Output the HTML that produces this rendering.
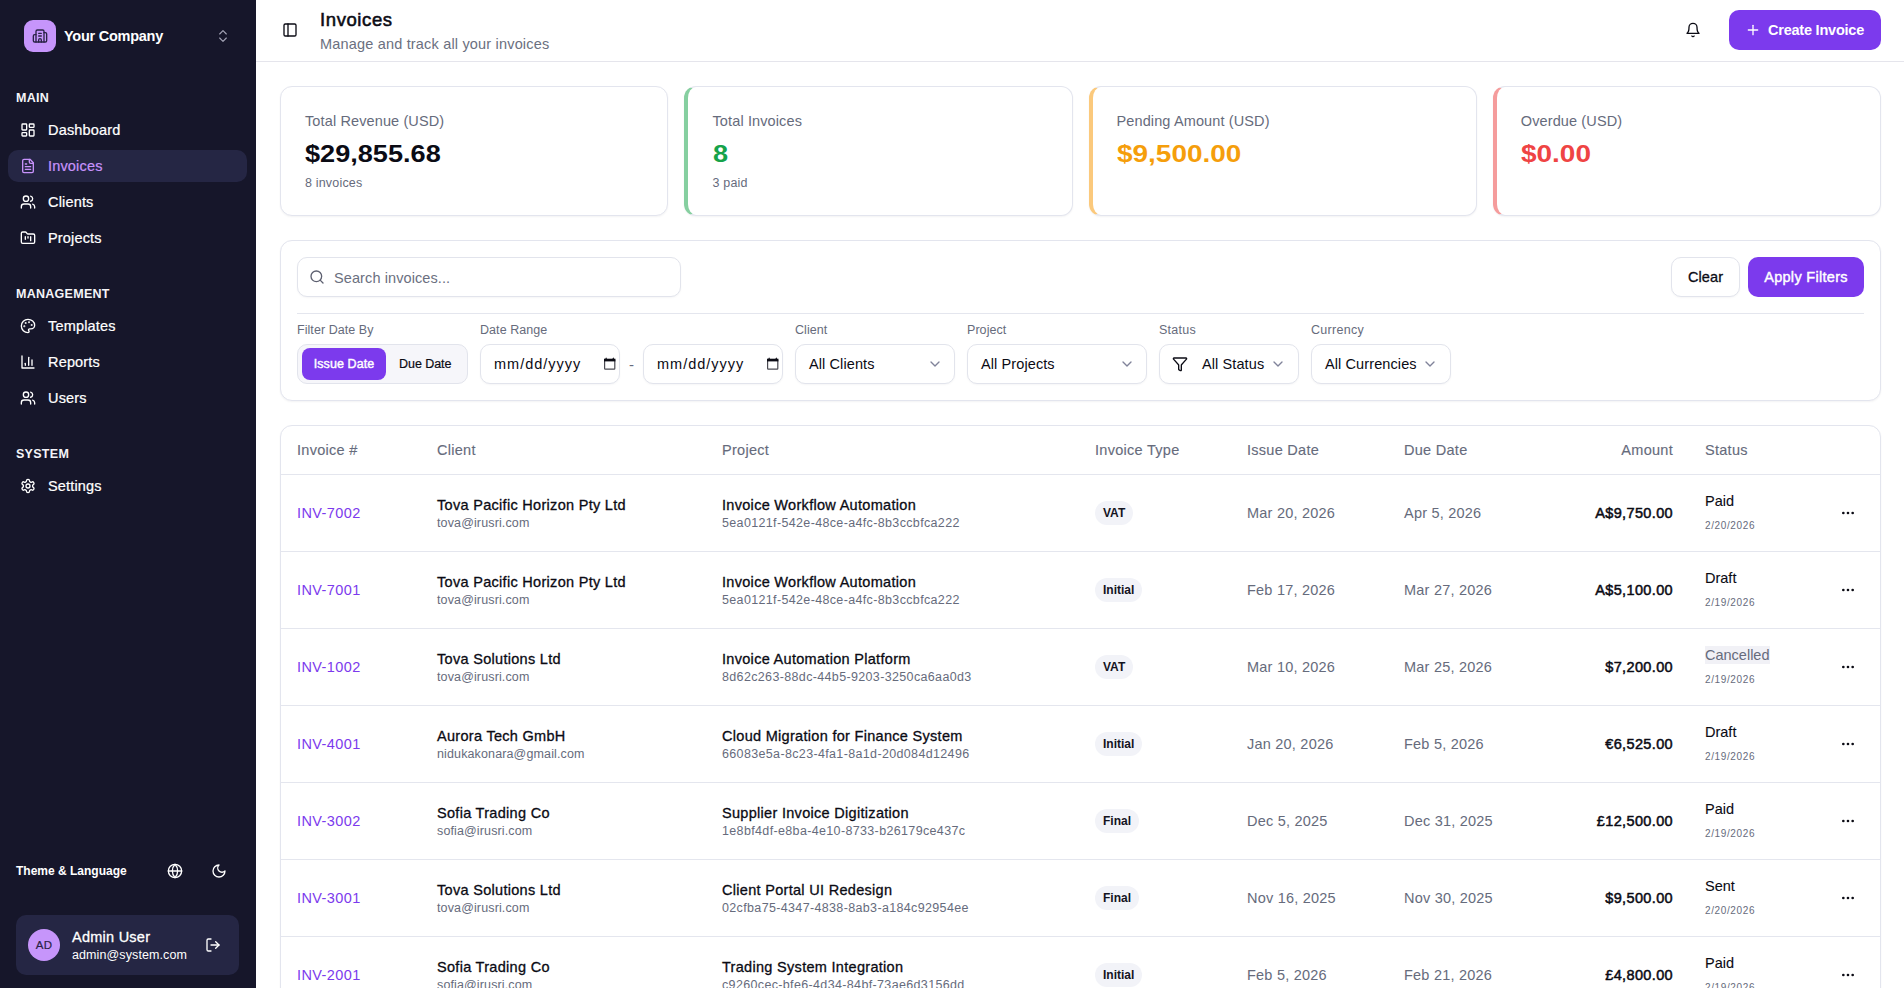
<!DOCTYPE html>
<html lang="en">
<head>
<meta charset="utf-8">
<title>Invoices</title>
<style>
*{box-sizing:border-box;margin:0;padding:0}
html,body{width:1904px;height:988px;overflow:hidden;background:#fff;font-family:"Liberation Sans",sans-serif;color:#0b0b14;-webkit-font-smoothing:antialiased}
svg{display:block;fill:none;stroke:currentColor;stroke-width:2;stroke-linecap:round;stroke-linejoin:round}
.abs{position:absolute}
#root{position:absolute;left:0;top:0;width:1904px;height:988px;overflow:hidden;background:#fff}
/* SIDEBAR */
#sb{position:absolute;left:0;top:0;width:256px;height:988px;background:#16162a;color:#fff}
#sb .logo{position:absolute;left:24px;top:20px;width:32px;height:32px;border-radius:9px;background:#c695fb;color:#2a2347;display:flex;align-items:center;justify-content:center}
#sb .co{position:absolute;left:64px;top:27px;font-size:14.5px;font-weight:700;line-height:18px;letter-spacing:-.25px}
#sb .chev{position:absolute;left:215px;top:28px;color:#a3a3b5}
#sb .sec{position:absolute;left:16px;font-size:12.5px;font-weight:700;letter-spacing:.28px;line-height:14px;color:#f4f4f8}
#sb .it{position:absolute;left:8px;width:239px;height:32px;border-radius:10px;display:flex;align-items:center;padding-left:12px;font-size:14.5px;color:#fff;line-height:18px;letter-spacing:.17px;-webkit-text-stroke:.22px currentColor}
#sb .it svg{margin-right:12px;flex:none}
#sb .it.on{background:#252644;color:#c792fb}
#sb .tl{position:absolute;left:16px;top:863px;font-size:12px;font-weight:700;line-height:16px;letter-spacing:0}
#sb .user{position:absolute;left:16px;top:915px;width:223px;height:60px;border-radius:10px;background:#252644}
#sb .av{position:absolute;left:12px;top:14px;width:32px;height:32px;border-radius:50%;background:#c695fb;color:#2a2347;font-size:11.5px;font-weight:400;display:flex;align-items:center;justify-content:center;letter-spacing:.2px;-webkit-text-stroke:.2px #2a2347}
#sb .un{position:absolute;left:56px;top:13px;font-size:14.5px;line-height:18px;font-weight:400;letter-spacing:.25px;-webkit-text-stroke:.3px #fff}
#sb .ue{position:absolute;left:56px;top:32px;font-size:12.5px;line-height:16px;letter-spacing:.1px}
/* HEADER */
#hd{position:absolute;left:256px;top:0;width:1648px;height:62px;border-bottom:1px solid #e5e5ec;background:#fff}
#hd h1{position:absolute;left:64px;top:8px;font-size:18.5px;line-height:24px;font-weight:400;letter-spacing:.6px;-webkit-text-stroke:.55px #0b0b14}
#hd .sub{position:absolute;left:64px;top:35px;font-size:14.5px;line-height:18px;color:#6b7080;letter-spacing:.18px}
#hd .cta{position:absolute;left:1473px;top:10px;width:152px;height:40px;border-radius:10px;background:#7c3aed;color:#fff;font-size:14.5px;font-weight:700;display:flex;align-items:center;padding-left:16px;letter-spacing:-.22px}
#hd .cta svg{margin-right:7px}
/* CARDS */
.card{position:absolute;background:#fff;border:1px solid #e3e5ee;border-radius:12px;box-shadow:0 1px 2px rgba(16,16,40,.05)}
.stat{top:86px;width:388px;height:130px}
.stat.b{border-left-width:4px}
.stat .l{position:absolute;left:24px;top:25px;font-size:14.5px;line-height:18px;color:#666b7c;letter-spacing:.12px}
.stat .v{position:absolute;left:24px;top:51px;font-size:24px;line-height:32px;font-weight:700;transform:scaleX(1.13);transform-origin:0 0;white-space:nowrap}
.stat.c3 .v,.stat.c4 .v{transform:scaleX(1.165)}
.stat .s{position:absolute;left:24px;top:88px;font-size:12.5px;line-height:16px;color:#666b7c;letter-spacing:.18px}
.stat.c2>div{left:24.5px}.stat.c3>div{left:23.5px}.stat.c4>div{left:23.75px}

/* FILTERS */
#flt{left:280px;top:240px;width:1601px;height:161px}
.inp{position:absolute;border:1px solid #e2e4ec;border-radius:10px;background:#fff;box-shadow:0 1px 2px rgba(16,16,40,.04);display:flex;align-items:center;font-size:14.5px;line-height:18px;color:#0b0b14;white-space:nowrap;letter-spacing:.1px}
.lbl{position:absolute;top:81px;font-size:12.5px;line-height:16px;color:#666b7c;white-space:nowrap;letter-spacing:.06px}
.btnp{position:absolute;border-radius:10px;background:#7c3aed;color:#fff;font-size:14.5px;display:flex;align-items:center;justify-content:center;letter-spacing:.3px;-webkit-text-stroke:.42px #fff}
.cv{color:#80839a;position:absolute}
/* TABLE */
#tb{left:280px;top:425px;width:1601px;height:700px;overflow:hidden}
.th{position:absolute;top:15px;font-size:14.5px;line-height:18px;letter-spacing:.28px;color:#666b7c;-webkit-text-stroke:.12px #666b7c;white-space:nowrap}
.row{position:absolute;left:0;width:1599px;height:77px;border-top:1px solid #e4e6ee}
.row>*{position:absolute;white-space:nowrap}
.inv{left:16px;top:29px;font-size:14.5px;line-height:18px;letter-spacing:.4px;color:#7c3aed}
.t1{top:21px;font-size:14.5px;line-height:18px;letter-spacing:.3px;color:#0b0b14;-webkit-text-stroke:.3px #0b0b14}
.t2{top:40px;font-size:12.5px;line-height:16px;letter-spacing:.13px;color:#666b7c}
.t2.u{letter-spacing:.35px}
.bdg{left:814px;top:26px;height:24px;border-radius:12px;background:#f2f3f8;font-size:12px;line-height:24px;font-weight:700;padding:0 8px;letter-spacing:0;color:#14141f}
.dt{top:29px;font-size:14.5px;line-height:18px;letter-spacing:.22px;color:#666b7c}
.amt{right:207px;top:29px;font-size:14.5px;line-height:18px;font-weight:400;-webkit-text-stroke:.5px #0b0b14;letter-spacing:.36px;color:#0b0b14;text-align:right}
.st{left:1424px;top:17px;font-size:14.5px;line-height:18px;color:#0b0b14;-webkit-text-stroke:.1px #0b0b14}
.st.c{color:#666b7c;background:#f1f1f6;-webkit-text-stroke:0}
.sd{left:1424px;top:44px;font-size:10px;line-height:14px;letter-spacing:.62px;color:#666b7c}
.dots{left:1559px;top:30px}
</style>
</head>
<body>
<div id="root">
<!-- ============ SIDEBAR ============ -->
<div id="sb">
  <div class="logo"><svg width="16" height="16" viewBox="0 0 24 24"><path d="M10 12h4"/><path d="M10 8h4"/><path d="M14 21v-3a2 2 0 0 0-4 0v3"/><path d="M6 10H4a2 2 0 0 0-2 2v7a2 2 0 0 0 2 2h16a2 2 0 0 0 2-2V9a2 2 0 0 0-2-2h-2"/><path d="M6 21V5a2 2 0 0 1 2-2h8a2 2 0 0 1 2 2v16"/></svg></div>
  <div class="co">Your Company</div>
  <svg class="chev" width="16" height="16" viewBox="0 0 24 24" style="stroke-width:1.7"><path d="m7 15 5 5 5-5"/><path d="m7 9 5-5 5 5"/></svg>

  <div class="sec" style="top:91px">MAIN</div>
  <div class="it" style="top:114px"><svg width="16" height="16" viewBox="0 0 24 24"><rect width="7" height="9" x="3" y="3" rx="1"/><rect width="7" height="5" x="14" y="3" rx="1"/><rect width="7" height="9" x="14" y="12" rx="1"/><rect width="7" height="5" x="3" y="16" rx="1"/></svg>Dashboard</div>
  <div class="it on" style="top:150px"><svg width="16" height="16" viewBox="0 0 24 24"><path d="M15 2H6a2 2 0 0 0-2 2v16a2 2 0 0 0 2 2h12a2 2 0 0 0 2-2V7Z"/><path d="M14 2v4a2 2 0 0 0 2 2h4"/><path d="M10 9H8"/><path d="M16 13H8"/><path d="M16 17H8"/></svg>Invoices</div>
  <div class="it" style="top:186px"><svg width="16" height="16" viewBox="0 0 24 24"><path d="M16 21v-2a4 4 0 0 0-4-4H6a4 4 0 0 0-4 4v2"/><circle cx="9" cy="7" r="4"/><path d="M22 21v-2a4 4 0 0 0-3-3.87"/><path d="M16 3.13a4 4 0 0 1 0 7.75"/></svg>Clients</div>
  <div class="it" style="top:222px"><svg width="16" height="16" viewBox="0 0 24 24"><path d="M4 20h16a2 2 0 0 0 2-2V8a2 2 0 0 0-2-2h-7.93a2 2 0 0 1-1.66-.9l-.82-1.2A2 2 0 0 0 7.93 3H4a2 2 0 0 0-2 2v13c0 1.1.9 2 2 2Z"/><path d="M8 10v4"/><path d="M12 10v2"/><path d="M16 10v6"/></svg>Projects</div>

  <div class="sec" style="top:287px">MANAGEMENT</div>
  <div class="it" style="top:310px"><svg width="16" height="16" viewBox="0 0 24 24"><circle cx="13.5" cy="6.5" r=".5" fill="currentColor"/><circle cx="17.5" cy="10.5" r=".5" fill="currentColor"/><circle cx="8.5" cy="7.5" r=".5" fill="currentColor"/><circle cx="6.5" cy="12.5" r=".5" fill="currentColor"/><path d="M12 2C6.5 2 2 6.5 2 12s4.5 10 10 10c.926 0 1.648-.746 1.648-1.688 0-.437-.18-.835-.437-1.125-.29-.289-.438-.652-.438-1.125a1.64 1.64 0 0 1 1.668-1.668h1.996c3.051 0 5.555-2.503 5.555-5.554C21.965 6.012 17.461 2 12 2z"/></svg>Templates</div>
  <div class="it" style="top:346px"><svg width="16" height="16" viewBox="0 0 24 24"><path d="M3 3v18h18"/><path d="M18 17V9"/><path d="M13 17V5"/><path d="M8 17v-3"/></svg>Reports</div>
  <div class="it" style="top:382px"><svg width="16" height="16" viewBox="0 0 24 24"><path d="M16 21v-2a4 4 0 0 0-4-4H6a4 4 0 0 0-4 4v2"/><circle cx="9" cy="7" r="4"/><path d="M22 21v-2a4 4 0 0 0-3-3.87"/><path d="M16 3.13a4 4 0 0 1 0 7.75"/></svg>Users</div>

  <div class="sec" style="top:447px">SYSTEM</div>
  <div class="it" style="top:470px"><svg width="16" height="16" viewBox="0 0 24 24"><path d="M12.22 2h-.44a2 2 0 0 0-2 2v.18a2 2 0 0 1-1 1.73l-.43.25a2 2 0 0 1-2 0l-.15-.08a2 2 0 0 0-2.73.73l-.22.38a2 2 0 0 0 .73 2.73l.15.1a2 2 0 0 1 1 1.72v.51a2 2 0 0 1-1 1.74l-.15.09a2 2 0 0 0-.73 2.73l.22.38a2 2 0 0 0 2.73.73l.15-.08a2 2 0 0 1 2 0l.43.25a2 2 0 0 1 1 1.73V20a2 2 0 0 0 2 2h.44a2 2 0 0 0 2-2v-.18a2 2 0 0 1 1-1.73l.43-.25a2 2 0 0 1 2 0l.15.08a2 2 0 0 0 2.73-.73l.22-.39a2 2 0 0 0-.73-2.73l-.15-.08a2 2 0 0 1-1-1.74v-.5a2 2 0 0 1 1-1.74l.15-.09a2 2 0 0 0 .73-2.73l-.22-.38a2 2 0 0 0-2.73-.73l-.15.08a2 2 0 0 1-2 0l-.43-.25a2 2 0 0 1-1-1.73V4a2 2 0 0 0-2-2z"/><circle cx="12" cy="12" r="3"/></svg>Settings</div>

  <div class="tl">Theme &amp; Language</div>
  <svg class="abs" style="left:167px;top:863px" width="16" height="16" viewBox="0 0 24 24"><circle cx="12" cy="12" r="10"/><path d="M12 2a14.5 14.5 0 0 0 0 20 14.5 14.5 0 0 0 0-20"/><path d="M2 12h20"/></svg>
  <svg class="abs" style="left:211px;top:863px" width="16" height="16" viewBox="0 0 24 24"><path d="M12 3a6 6 0 0 0 9 9 9 9 0 1 1-9-9Z"/></svg>

  <div class="user">
    <div class="av">AD</div>
    <div class="un">Admin User</div>
    <div class="ue">admin@system.com</div>
    <svg class="abs" style="left:189px;top:22px" width="16" height="16" viewBox="0 0 24 24"><path d="M9 21H5a2 2 0 0 1-2-2V5a2 2 0 0 1 2-2h4"/><polyline points="16 17 21 12 16 7"/><line x1="21" x2="9" y1="12" y2="12"/></svg>
  </div>
</div>

<!-- ============ HEADER ============ -->
<div id="hd">
  <svg class="abs" style="left:26px;top:22px" width="16" height="16" viewBox="0 0 24 24"><rect width="18" height="18" x="3" y="3" rx="2"/><path d="M9 3v18"/></svg>
  <h1>Invoices</h1>
  <div class="sub">Manage and track all your invoices</div>
  <svg class="abs" style="left:1429px;top:22px" width="16" height="16" viewBox="0 0 24 24"><path d="M6 8a6 6 0 0 1 12 0c0 7 3 9 3 9H3s3-2 3-9"/><path d="M10.3 21a1.94 1.94 0 0 0 3.4 0"/></svg>
  <div class="cta"><svg width="16" height="16" viewBox="0 0 24 24"><path d="M5 12h14"/><path d="M12 5v14"/></svg>Create Invoice</div>
</div>

<!-- ============ STAT CARDS ============ -->
<div class="card stat" style="left:280px"><div class="l">Total Revenue (USD)</div><div class="v">$29,855.68</div><div class="s">8 invoices</div></div>
<div class="card stat b c2" style="left:684px;width:389px;border-left-color:#86cfa0"><div class="l">Total Invoices</div><div class="v" style="color:#16a34a">8</div><div class="s">3 paid</div></div>
<div class="card stat b c3" style="left:1089px;border-left-color:#fbc97c"><div class="l">Pending Amount (USD)</div><div class="v" style="color:#f59e0b">$9,500.00</div></div>
<div class="card stat b c4" style="left:1493px;border-left-color:#f59c9c"><div class="l">Overdue (USD)</div><div class="v" style="color:#ef4444">$0.00</div></div>

<div class="card" id="flt">
  <div class="inp" style="left:16px;top:16px;width:384px;height:40px;padding-left:36px;padding-top:2px;color:#6b7080">Search invoices...
    <svg class="abs" style="left:11px;top:11px;color:#5d6070" width="16" height="16" viewBox="0 0 24 24"><circle cx="11" cy="11" r="8"/><path d="m21 21-4.3-4.300"/></svg>
  </div>
  <div class="inp" style="left:1390px;top:16px;width:69px;height:40px;justify-content:center;-webkit-text-stroke:.3px #0b0b14">Clear</div>
  <div class="btnp" style="left:1467px;top:16px;width:116px;height:40px">Apply Filters</div>
  <div class="abs" style="left:16px;top:72px;width:1567px;height:1px;background:#e4e6ee"></div>

  <div class="lbl" style="left:16px">Filter Date By</div>
  <div class="inp" style="left:16px;top:103px;width:171px;height:40px;background:#f6f6fa;box-shadow:none">
    <div class="btnp" style="left:4px;top:3px;width:84px;height:32px;border-radius:8px;font-size:12.5px;letter-spacing:.08px">Issue Date</div>
    <div class="abs" style="left:101px;top:11px;font-size:12.5px;line-height:16px;letter-spacing:-.05px;-webkit-text-stroke:.2px #0b0b14">Due Date</div>
  </div>
  <div class="lbl" style="left:199px">Date Range</div>
  <div class="inp" style="left:199px;top:103px;width:140px;height:40px;padding-left:13px;letter-spacing:1px">mm/dd/yyyy<svg class="abs" style="left:123px;top:12px;stroke:none" width="12" height="13" viewBox="0 0 12 13"><rect x=".6" y="2.6" width="10.2" height="9.5" rx=".6" fill="none" stroke="#4a4a52" stroke-width="1.2"/><rect x="0" y="1.7" width="11.4" height="2.7" fill="#0b0b14"/><path d="M1.300 2 2.100.3 3 2zM8.400 2l.9-1.700L10.100 2z" fill="#0b0b14"/></svg></div>
  <div class="abs" style="left:348px;top:114.5px;font-size:15px;line-height:18px;color:#666b7c">-</div>
  <div class="inp" style="left:362px;top:103px;width:140px;height:40px;padding-left:13px;letter-spacing:1px">mm/dd/yyyy<svg class="abs" style="left:123px;top:12px;stroke:none" width="12" height="13" viewBox="0 0 12 13"><rect x=".6" y="2.6" width="10.2" height="9.5" rx=".6" fill="none" stroke="#4a4a52" stroke-width="1.2"/><rect x="0" y="1.7" width="11.4" height="2.7" fill="#0b0b14"/><path d="M1.300 2 2.100.3 3 2zM8.400 2l.9-1.700L10.100 2z" fill="#0b0b14"/></svg></div>
  <div class="lbl" style="left:514px">Client</div>
  <div class="inp" style="left:514px;top:103px;width:160px;height:40px;padding-left:13px">All Clients<svg class="cv" style="left:131px;top:11px" width="16" height="16" viewBox="0 0 24 24" stroke-width="1.8"><path d="m6 9 6 6 6-6"/></svg></div>
  <div class="lbl" style="left:686px">Project</div>
  <div class="inp" style="left:686px;top:103px;width:180px;height:40px;padding-left:13px">All Projects<svg class="cv" style="left:151px;top:11px" width="16" height="16" viewBox="0 0 24 24" stroke-width="1.8"><path d="m6 9 6 6 6-6"/></svg></div>
  <div class="lbl" style="left:878px;letter-spacing:.25px">Status</div>
  <div class="inp" style="left:878px;top:103px;width:140px;height:40px;padding-left:42px">All Status
    <svg class="abs" style="left:12px;top:11px" width="16" height="16" viewBox="0 0 24 24"><path d="M10 20a1 1 0 0 0 .553.895l2 1A1 1 0 0 0 14 21v-7a2 2 0 0 1 .517-1.341L21.740 4.670A1 1 0 0 0 21 3H3a1 1 0 0 0-.742 1.670l7.225 7.989A2 2 0 0 1 10 14z"/></svg><svg class="cv" style="left:110px;top:11px" width="16" height="16" viewBox="0 0 24 24" stroke-width="1.8"><path d="m6 9 6 6 6-6"/></svg></div>
  <div class="lbl" style="left:1030px;letter-spacing:.28px">Currency</div>
  <div class="inp" style="left:1030px;top:103px;width:140px;height:40px;padding-left:13px">All Currencies<svg class="cv" style="left:110px;top:11px" width="16" height="16" viewBox="0 0 24 24" stroke-width="1.8"><path d="m6 9 6 6 6-6"/></svg></div>
</div>

<div class="card" id="tb">
  <div class="th" style="left:16px">Invoice #</div>
  <div class="th" style="left:156px">Client</div>
  <div class="th" style="left:441px">Project</div>
  <div class="th" style="left:814px">Invoice Type</div>
  <div class="th" style="left:966px">Issue Date</div>
  <div class="th" style="left:1123px">Due Date</div>
  <div class="th" style="left:1424px">Status</div>
  <div class="th" style="right:207px">Amount</div>
  <div class="row" style="top:48px"><div class="inv">INV-7002</div><div class="t1" style="left:156px">Tova Pacific Horizon Pty Ltd</div><div class="t2" style="left:156px">tova@irusri.com</div><div class="t1" style="left:441px">Invoice Workflow Automation</div><div class="t2 u" style="left:441px">5ea0121f-542e-48ce-a4fc-8b3ccbfca222</div><div class="bdg">VAT</div><div class="dt" style="left:966px">Mar 20, 2026</div><div class="dt" style="left:1123px">Apr 5, 2026</div><div class="amt">A$9,750.00</div><div class="st">Paid</div><div class="sd">2/20/2026</div><svg class="dots" width="16" height="16" viewBox="0 0 24 24"><circle cx="12" cy="12" r="1"/><circle cx="19" cy="12" r="1"/><circle cx="5" cy="12" r="1"/></svg></div>
  <div class="row" style="top:125px"><div class="inv">INV-7001</div><div class="t1" style="left:156px">Tova Pacific Horizon Pty Ltd</div><div class="t2" style="left:156px">tova@irusri.com</div><div class="t1" style="left:441px">Invoice Workflow Automation</div><div class="t2 u" style="left:441px">5ea0121f-542e-48ce-a4fc-8b3ccbfca222</div><div class="bdg">Initial</div><div class="dt" style="left:966px">Feb 17, 2026</div><div class="dt" style="left:1123px">Mar 27, 2026</div><div class="amt">A$5,100.00</div><div class="st">Draft</div><div class="sd">2/19/2026</div><svg class="dots" width="16" height="16" viewBox="0 0 24 24"><circle cx="12" cy="12" r="1"/><circle cx="19" cy="12" r="1"/><circle cx="5" cy="12" r="1"/></svg></div>
  <div class="row" style="top:202px"><div class="inv">INV-1002</div><div class="t1" style="left:156px">Tova Solutions Ltd</div><div class="t2" style="left:156px">tova@irusri.com</div><div class="t1" style="left:441px">Invoice Automation Platform</div><div class="t2 u" style="left:441px">8d62c263-88dc-44b5-9203-3250ca6aa0d3</div><div class="bdg">VAT</div><div class="dt" style="left:966px">Mar 10, 2026</div><div class="dt" style="left:1123px">Mar 25, 2026</div><div class="amt">$7,200.00</div><div class="st c">Cancelled</div><div class="sd">2/19/2026</div><svg class="dots" width="16" height="16" viewBox="0 0 24 24"><circle cx="12" cy="12" r="1"/><circle cx="19" cy="12" r="1"/><circle cx="5" cy="12" r="1"/></svg></div>
  <div class="row" style="top:279px"><div class="inv">INV-4001</div><div class="t1" style="left:156px">Aurora Tech GmbH</div><div class="t2" style="left:156px">nidukakonara@gmail.com</div><div class="t1" style="left:441px">Cloud Migration for Finance System</div><div class="t2 u" style="left:441px">66083e5a-8c23-4fa1-8a1d-20d084d12496</div><div class="bdg">Initial</div><div class="dt" style="left:966px">Jan 20, 2026</div><div class="dt" style="left:1123px">Feb 5, 2026</div><div class="amt">€6,525.00</div><div class="st">Draft</div><div class="sd">2/19/2026</div><svg class="dots" width="16" height="16" viewBox="0 0 24 24"><circle cx="12" cy="12" r="1"/><circle cx="19" cy="12" r="1"/><circle cx="5" cy="12" r="1"/></svg></div>
  <div class="row" style="top:356px"><div class="inv">INV-3002</div><div class="t1" style="left:156px">Sofia Trading Co</div><div class="t2" style="left:156px">sofia@irusri.com</div><div class="t1" style="left:441px">Supplier Invoice Digitization</div><div class="t2 u" style="left:441px">1e8bf4df-e8ba-4e10-8733-b26179ce437c</div><div class="bdg">Final</div><div class="dt" style="left:966px">Dec 5, 2025</div><div class="dt" style="left:1123px">Dec 31, 2025</div><div class="amt">£12,500.00</div><div class="st">Paid</div><div class="sd">2/19/2026</div><svg class="dots" width="16" height="16" viewBox="0 0 24 24"><circle cx="12" cy="12" r="1"/><circle cx="19" cy="12" r="1"/><circle cx="5" cy="12" r="1"/></svg></div>
  <div class="row" style="top:433px"><div class="inv">INV-3001</div><div class="t1" style="left:156px">Tova Solutions Ltd</div><div class="t2" style="left:156px">tova@irusri.com</div><div class="t1" style="left:441px">Client Portal UI Redesign</div><div class="t2 u" style="left:441px">02cfba75-4347-4838-8ab3-a184c92954ee</div><div class="bdg">Final</div><div class="dt" style="left:966px">Nov 16, 2025</div><div class="dt" style="left:1123px">Nov 30, 2025</div><div class="amt">$9,500.00</div><div class="st">Sent</div><div class="sd">2/20/2026</div><svg class="dots" width="16" height="16" viewBox="0 0 24 24"><circle cx="12" cy="12" r="1"/><circle cx="19" cy="12" r="1"/><circle cx="5" cy="12" r="1"/></svg></div>
  <div class="row" style="top:510px"><div class="inv">INV-2001</div><div class="t1" style="left:156px">Sofia Trading Co</div><div class="t2" style="left:156px">sofia@irusri.com</div><div class="t1" style="left:441px">Trading System Integration</div><div class="t2 u" style="left:441px">c9260cec-bfe6-4d34-84bf-73ae6d3156dd</div><div class="bdg">Initial</div><div class="dt" style="left:966px">Feb 5, 2026</div><div class="dt" style="left:1123px">Feb 21, 2026</div><div class="amt">£4,800.00</div><div class="st">Paid</div><div class="sd">2/19/2026</div><svg class="dots" width="16" height="16" viewBox="0 0 24 24"><circle cx="12" cy="12" r="1"/><circle cx="19" cy="12" r="1"/><circle cx="5" cy="12" r="1"/></svg></div>
</div>

</div>
</body>
</html>
